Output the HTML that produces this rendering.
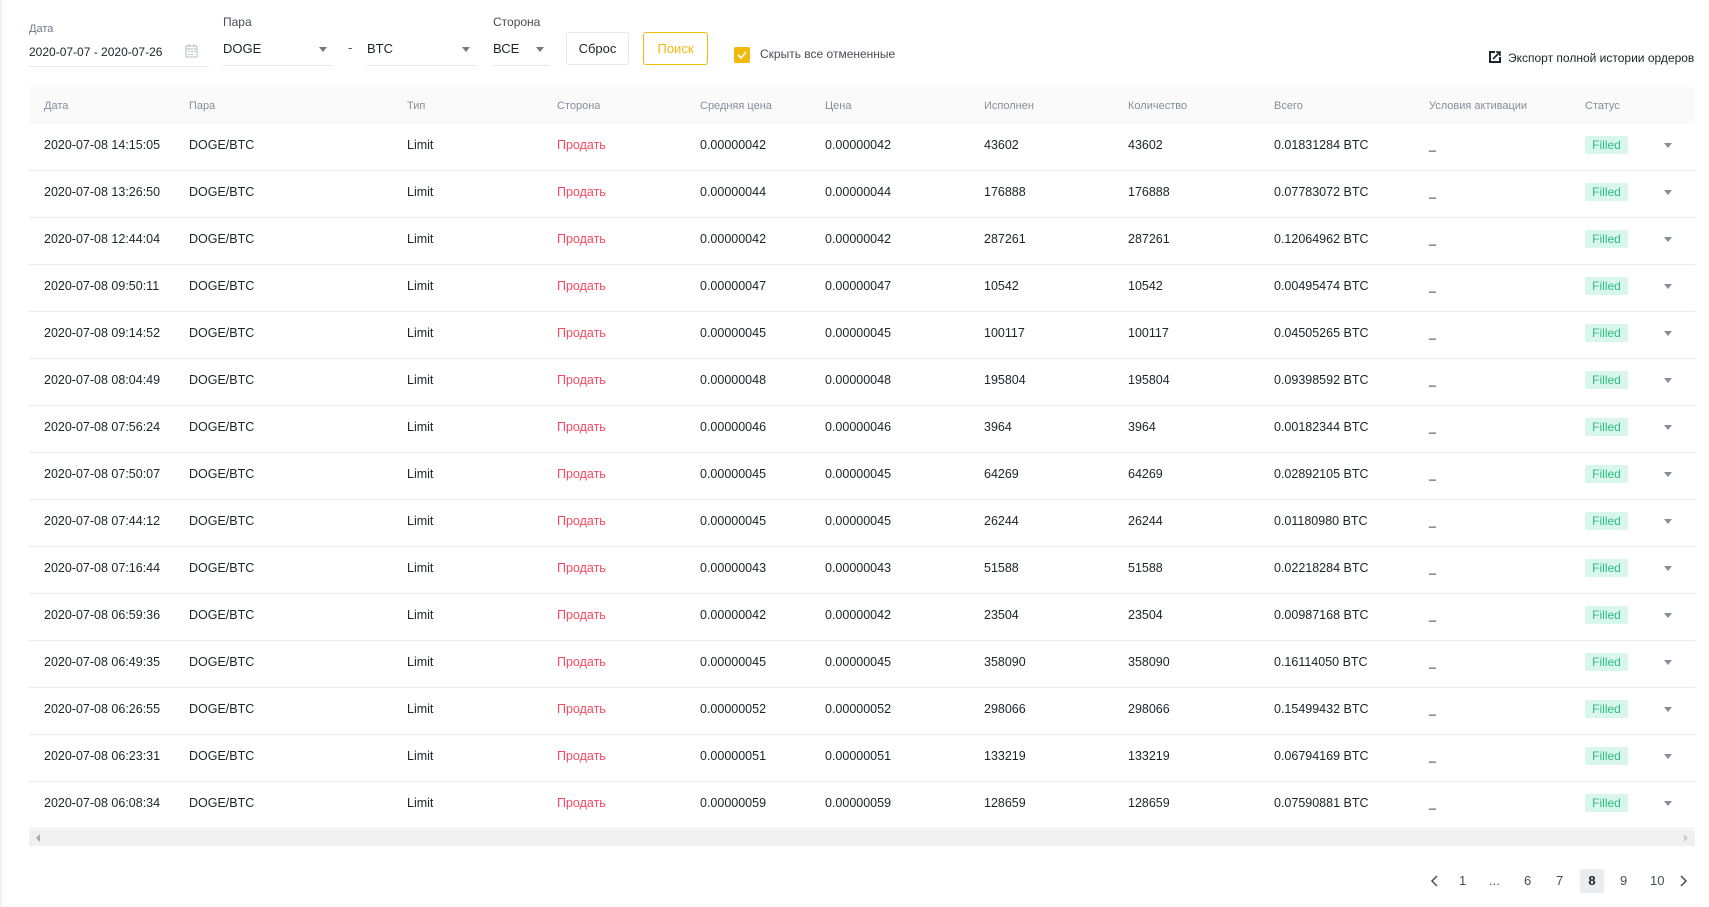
<!DOCTYPE html>
<html><head><meta charset="utf-8"><style>
*{margin:0;padding:0;box-sizing:border-box}
body{width:1709px;height:907px;background:#fff;font-family:"Liberation Sans",sans-serif;color:#1e2329;position:relative;overflow:hidden;font-size:13px}
.a{position:absolute;white-space:nowrap}
.lbl{font-size:12px;color:#474d57}
.ul{position:absolute;height:1px;background:#e6e8ea}
.arr{position:absolute;width:0;height:0;border-left:4px solid transparent;border-right:4px solid transparent;border-top:5px solid #707a8a}
.btn{position:absolute;border:1px solid #e6e8ea;border-radius:3px;display:flex;align-items:center;justify-content:center;font-size:13px}
.hdr{position:absolute;left:29px;top:87px;width:1666px;height:37px;background:#fafafa}
.h{position:absolute;top:100px;font-size:11px;color:#848e9c}
.row{position:absolute;left:29px;width:1666px;height:47px;border-bottom:1px solid #eaecef}
.row span{position:absolute;top:14px;font-size:12.5px;white-space:nowrap}
.red{color:#f84960}
.badge{position:absolute;top:12px;left:1556px;width:43px;height:18px;background:#d9f6ec;color:#2ebd85;border-radius:2px;font-size:12px;text-align:center;line-height:18px}
.chev{position:absolute;left:1635px;top:19px;width:0;height:0;border-left:4px solid transparent;border-right:4px solid transparent;border-top:5px solid #848e9c}
.pg{position:absolute;top:873px;font-size:13px;color:#474d57}
</style></head><body>
<div style="position:absolute;left:0;top:0;width:2px;height:907px;background:#f0f0f0"></div>
<div class="a lbl" style="left:29px;top:23px;font-size:11px;color:#707a8a">Дата</div>
<div class="a" style="left:29px;top:45px;font-size:12px">2020-07-07 - 2020-07-26</div>
<svg class="a" style="left:185px;top:44px" width="13" height="14" viewBox="0 0 13 14"><rect x="1" y="2" width="11" height="11" fill="none" stroke="#b7bdc6"/><line x1="1" y1="5" x2="12" y2="5" stroke="#b7bdc6"/><line x1="4" y1="0" x2="4" y2="3" stroke="#b7bdc6"/><line x1="9" y1="0" x2="9" y2="3" stroke="#b7bdc6"/><g fill="#b7bdc6"><rect x="3" y="7" width="2" height="1"/><rect x="6" y="7" width="2" height="1"/><rect x="9" y="7" width="2" height="1"/><rect x="3" y="10" width="2" height="1"/><rect x="6" y="10" width="2" height="1"/></g></svg>
<div class="ul" style="left:29px;top:66px;width:180px"></div>
<div class="a lbl" style="left:223px;top:15px">Пара</div>
<div class="a" style="left:223px;top:41px">DOGE</div>
<div class="arr" style="left:319px;top:47px"></div>
<div class="ul" style="left:223px;top:65px;width:110px"></div>
<div class="a" style="left:348px;top:40px;color:#474d57">-</div>
<div class="a" style="left:367px;top:41px">BTC</div>
<div class="arr" style="left:462px;top:47px"></div>
<div class="ul" style="left:367px;top:65px;width:110px"></div>
<div class="a lbl" style="left:493px;top:15px">Сторона</div>
<div class="a" style="left:493px;top:41px">ВСЕ</div>
<div class="arr" style="left:536px;top:47px"></div>
<div class="ul" style="left:493px;top:65px;width:57px"></div>
<div class="btn" style="left:566px;top:32px;width:63px;height:33px">Сброс</div>
<div class="btn" style="left:643px;top:32px;width:65px;height:33px;border-color:#f0b90b;color:#f0b90b">Поиск</div>
<div class="a" style="left:734px;top:47px;width:16px;height:16px;background:#f0b90b;border-radius:2px"><svg width="16" height="16"><path d="M4 8l3 3 5-6" stroke="#fff" stroke-width="1.6" fill="none"/></svg></div>
<div class="a" style="left:760px;top:47px;font-size:12px;color:#474d57">Скрыть все отмененные</div>
<svg class="a" style="left:1489px;top:51px" width="12" height="12" viewBox="0 0 12 12"><rect x="1" y="1" width="10" height="10" fill="none" stroke="#1e2329" stroke-width="2"/><rect x="6" y="0" width="6" height="6" fill="#fff"/><path d="M4 8L11 1M7 1h4v4" stroke="#1e2329" stroke-width="1.6" fill="none"/></svg>
<div class="a" style="left:1508px;top:51px;font-size:12px">Экспорт полной истории ордеров</div>
<div class="hdr"></div>
<div class="h" style="left:44px">Дата</div><div class="h" style="left:189px">Пара</div><div class="h" style="left:407px">Тип</div><div class="h" style="left:557px">Сторона</div><div class="h" style="left:700px">Средняя цена</div><div class="h" style="left:825px">Цена</div><div class="h" style="left:984px">Исполнен</div><div class="h" style="left:1128px">Количество</div><div class="h" style="left:1274px">Всего</div><div class="h" style="left:1429px">Условия активации</div><div class="h" style="left:1585px">Статус</div>
<div id="rows"></div>
<div class="a" style="left:29px;top:830px;width:1666px;height:16px;background:#f0f0f0"></div>
<div class="a" style="left:36px;top:834px;width:0;height:0;border-top:4px solid transparent;border-bottom:4px solid transparent;border-right:4px solid #aaa"></div>
<div class="a" style="left:1684px;top:834px;width:0;height:0;border-top:4px solid transparent;border-bottom:4px solid transparent;border-left:4px solid #ccc"></div>
<svg class="a" style="left:1430px;top:874px" width="10" height="14"><path d="M7 2L2 7l5 5" stroke="#474d57" stroke-width="1.5" fill="none"/></svg>
<div class="pg" style="left:1459px">1</div><div class="pg" style="left:1489px">...</div><div class="pg" style="left:1524px">6</div><div class="pg" style="left:1556px">7</div>
<div class="a" style="left:1580px;top:869px;width:24px;height:24px;background:#eaecef;border-radius:2px;text-align:center;line-height:24px;font-weight:bold">8</div>
<div class="pg" style="left:1620px">9</div><div class="pg" style="left:1650px">10</div>
<svg class="a" style="left:1678px;top:874px" width="10" height="14"><path d="M3 2l5 5-5 5" stroke="#474d57" stroke-width="1.5" fill="none"/></svg>
<script>
var d=[["14:15:05","42","43602","0.01831284"],["13:26:50","44","176888","0.07783072"],["12:44:04","42","287261","0.12064962"],["09:50:11","47","10542","0.00495474"],["09:14:52","45","100117","0.04505265"],["08:04:49","48","195804","0.09398592"],["07:56:24","46","3964","0.00182344"],["07:50:07","45","64269","0.02892105"],["07:44:12","45","26244","0.01180980"],["07:16:44","43","51588","0.02218284"],["06:59:36","42","23504","0.00987168"],["06:49:35","45","358090","0.16114050"],["06:26:55","52","298066","0.15499432"],["06:23:31","51","133219","0.06794169"],["06:08:34","59","128659","0.07590881"]];
var h="";d.forEach(function(r,i){var t=124+i*47;h+='<div class="row" style="top:'+t+'px"><span style="left:15px">2020-07-08 '+r[0]+'</span><span style="left:160px">DOGE/BTC</span><span style="left:378px">Limit</span><span class="red" style="left:528px">Продать</span><span style="left:671px">0.000000'+r[1]+'</span><span style="left:796px">0.000000'+r[1]+'</span><span style="left:955px">'+r[2]+'</span><span style="left:1099px">'+r[2]+'</span><span style="left:1245px">'+r[3]+' BTC</span><span style="left:1400px;top:14px">_</span><div class="badge">Filled</div><div class="chev"></div></div>';});
document.getElementById("rows").innerHTML=h;
</script>
</body></html>
